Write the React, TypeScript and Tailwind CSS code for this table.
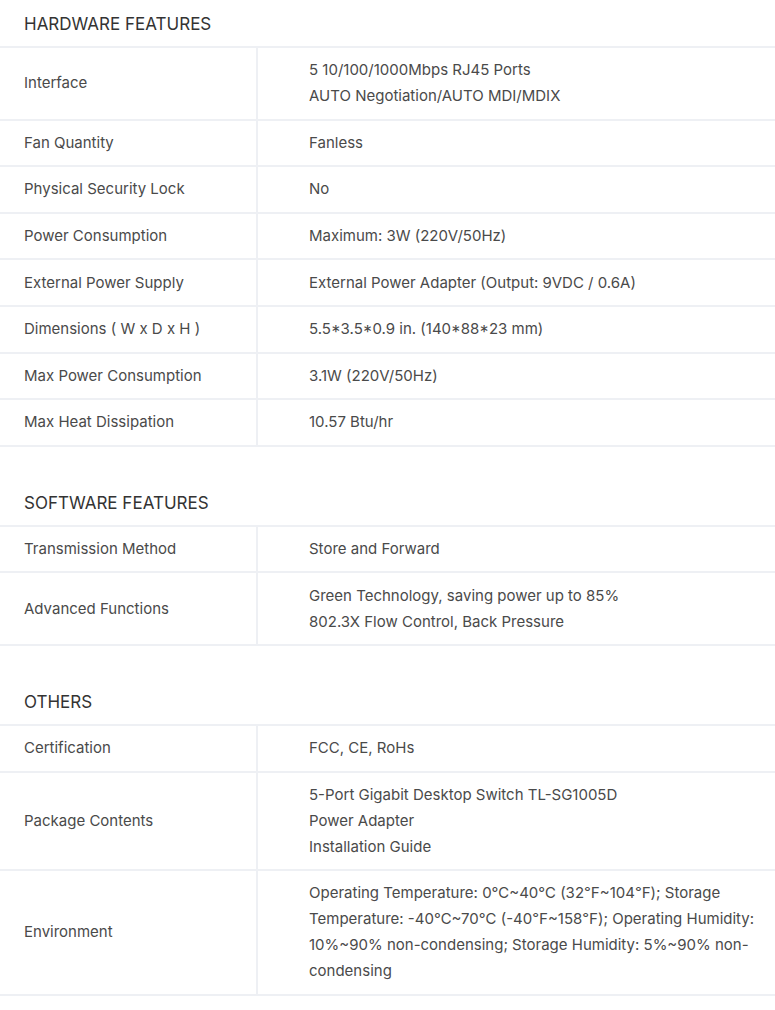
type Row = { label: string; value: string[] };
type Section = { title: string; rows: Row[] };

const sections: Section[] = [
  {
    title: 'HARDWARE FEATURES',
    rows: [
      { label: 'Interface', value: ['5 10/100/1000Mbps RJ45 Ports', 'AUTO Negotiation/AUTO MDI/MDIX'] },
      { label: 'Fan Quantity', value: ['Fanless'] },
      { label: 'Physical Security Lock', value: ['No'] },
      { label: 'Power Consumption', value: ['Maximum: 3W (220V/50Hz)'] },
      { label: 'External Power Supply', value: ['External Power Adapter (Output: 9VDC / 0.6A)'] },
      { label: 'Dimensions ( W x D x H )', value: ['5.5*3.5*0.9 in. (140*88*23 mm)'] },
      { label: 'Max Power Consumption', value: ['3.1W (220V/50Hz)'] },
      { label: 'Max Heat Dissipation', value: ['10.57 Btu/hr'] },
    ],
  },
  {
    title: 'SOFTWARE FEATURES',
    rows: [
      { label: 'Transmission Method', value: ['Store and Forward'] },
      { label: 'Advanced Functions', value: ['Green Technology, saving power up to 85%', '802.3X Flow Control, Back Pressure'] },
    ],
  },
  {
    title: 'OTHERS',
    rows: [
      { label: 'Certification', value: ['FCC, CE, RoHs'] },
      { label: 'Package Contents', value: ['5-Port Gigabit Desktop Switch TL-SG1005D', 'Power Adapter', 'Installation Guide'] },
      {
        label: 'Environment',
        value: [
          'Operating Temperature: 0℃~40℃ (32℉~104℉); Storage Temperature: -40℃~70℃ (-40℉~158℉); Operating Humidity: 10%~90% non-condensing; Storage Humidity: 5%~90% non-condensing',
        ],
      },
    ],
  },
];

export default function App() {
  return (
    <div className="min-h-screen bg-white font-['Inter','Noto_Sans',sans-serif] text-[#4a4a4a]">
      {sections.map((section, i) => (
        <section key={section.title} className={i > 0 ? 'mt-[32px]' : ''}>
          <h2 className="h-[46px] px-6 pt-[11px] text-[17px] leading-[26px] text-[#333]">{section.title}</h2>
          <div className="border-t-2 border-[#eef0f4]">
            {section.rows.map((row) => (
              <div key={row.label} className="grid grid-cols-[258px_1fr] border-b-2 border-[#eef0f4] text-[15px] leading-[26px]">
                <div className="flex items-center border-r-2 border-[#eef0f4] px-6 py-[9.3px]">{row.label}</div>
                <div className="py-[9.3px] pl-[51px] pr-5">
                  {row.value.map((line) => (
                    <div key={line}>{line}</div>
                  ))}
                </div>
              </div>
            ))}
          </div>
        </section>
      ))}
    </div>
  );
}
